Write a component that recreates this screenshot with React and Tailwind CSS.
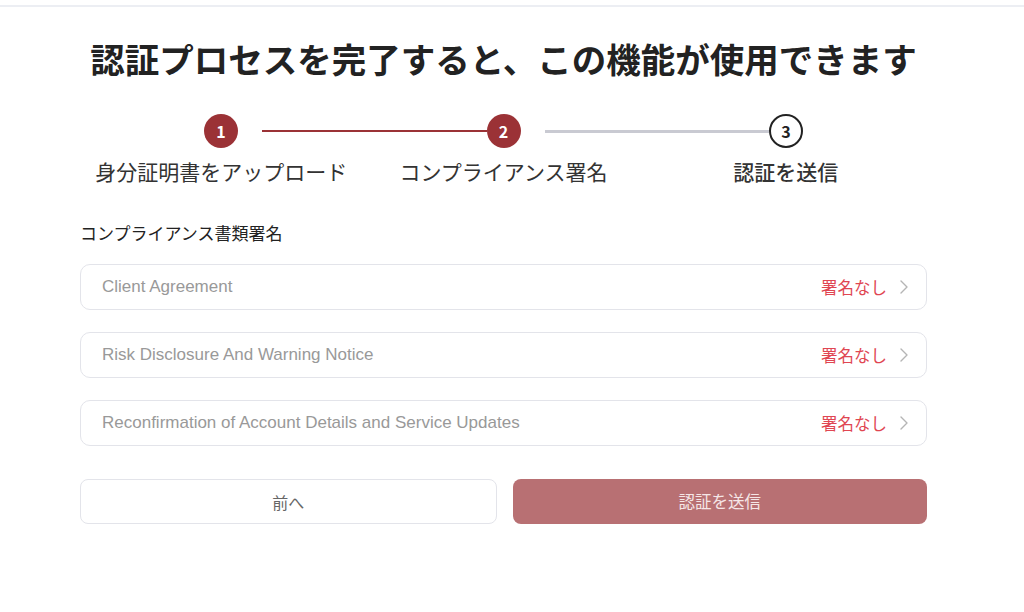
import React from "react";

const docs = [
  "Client Agreement",
  "Risk Disclosure And Warning Notice",
  "Reconfirmation of Account Details and Service Updates",
];

function Chevron() {
  return (
    <svg width="10" height="16" viewBox="0 0 10 16" fill="none" className="ml-3">
      <path d="M2 2l6 6-6 6" stroke="#b5b5b5" strokeWidth="1.4" strokeLinecap="round" strokeLinejoin="round" />
    </svg>
  );
}

export default function App() {
  return (
    <div
      className="w-[1024px] h-[612px] bg-white"
      style={{ fontFamily: '"Noto Sans CJK JP", "Liberation Sans", sans-serif' }}
    >
      <div className="h-[5px]" />
      <div className="h-[2px] bg-[#eceef3]" />

      <div className="w-[847px] ml-[80px]">
        {/* Title */}
        <h1 className="mt-[28px] text-center text-[34.5px] leading-[46px] font-bold text-[#222]">
          認証プロセスを完了すると、この機能が使用できます
        </h1>

        {/* Steps */}
        <div className="mt-[33px] flex items-center px-[124px]">
          <div className="w-[34px] h-[34px] rounded-full bg-[#9b3236] text-white flex items-center justify-center text-[16px] font-bold">
            1
          </div>
          <div className="ml-6 flex-1 h-[2px] bg-[#9b3236]" />
          <div className="w-[34px] h-[34px] rounded-full bg-[#9b3236] text-white flex items-center justify-center text-[16px] font-bold">
            2
          </div>
          <div className="ml-6 flex-1 h-[3px] bg-[#c9cad2]" />
          <div className="w-[34px] h-[34px] rounded-full border-2 border-[#222] text-[#222] flex items-center justify-center text-[16px] font-bold">
            3
          </div>
        </div>
        <div className="grid grid-cols-3 mt-[9px] text-[21px] leading-[29px] text-center">
          <div className="text-[#333]">身分証明書をアップロード</div>
          <div className="text-[#333]">コンプライアンス署名</div>
          <div className="text-[#333] font-medium">認証を送信</div>
        </div>

        {/* Documents */}
        <div className="mt-[34px] text-[17px] leading-[26px] text-[#222]">
          コンプライアンス書類署名
        </div>
        <div className="mt-[18px] flex flex-col gap-[22px]">
          {docs.map((d) => (
            <div
              key={d}
              className="h-[46px] rounded-[10px] border border-[#e3e4ea] flex items-center pl-[21px] pr-[17px]"
            >
              <span
                className="flex-1 text-[17px] text-[#999]"
                style={{ fontFamily: '"Liberation Sans", Arial, sans-serif' }}
              >
                {d}
              </span>
              <span className="text-[16.5px] text-[#e04652]">署名なし</span>
              <Chevron />
            </div>
          ))}
        </div>

        {/* Buttons */}
        <div className="mt-[33px] flex gap-[16px]">
          <button className="flex-1 h-[45px] rounded-[8px] border border-[#e3e4ea] bg-white text-[16px] text-[#666]">
            前へ
          </button>
          <button className="flex-1 h-[45px] rounded-[8px] bg-[#b87073] text-[16.5px] text-[#f5e6e6]">
            認証を送信
          </button>
        </div>
      </div>
    </div>
  );
}
